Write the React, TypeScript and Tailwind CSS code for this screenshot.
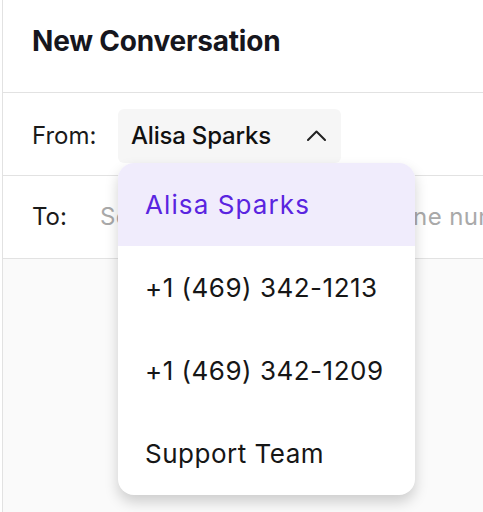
const options = ['Alisa Sparks', '+1 (469) 342-1213', '+1 (469) 342-1209', 'Support Team'];

export default function App() {
  return (
    <div
      className="w-[483px] h-[512px] overflow-hidden bg-white"
      style={{ fontFamily: 'Inter, "Noto Sans", sans-serif' }}
    >
      <div className="h-full ml-[2px] border-l border-[#e2e2e2] flex flex-col">
        <div className="h-[93px] flex items-center pl-[29px] pb-[11px] border-b border-[#e2e2e2]">
          <h1 className="text-[28px] font-bold text-[#16161d] tracking-[-0.2px]">New Conversation</h1>
        </div>

        <div className="h-[83px] flex items-center pl-[29px] pt-[3px] border-b border-[#e2e2e2]">
          <span className="shrink-0 text-[24px] text-[#1a1a1a] w-[86px]">From:</span>
          <div className="relative">
            <button className="flex items-center h-[54px] w-[223px] rounded-[6px] bg-[#f6f6f6] pl-[13px] pr-[15px]">
              <span className="text-[24px] font-medium tracking-[-0.2px] text-[#111]">Alisa Sparks</span>
              <svg className="ml-auto w-[19px] h-[11px]" viewBox="0 0 19 11" fill="none" stroke="#222" strokeWidth={2} strokeLinecap="round" strokeLinejoin="round">
                <path d="M1 10 L9.5 1.5 L18 10" />
              </svg>
            </button>
            <div className="absolute left-0 top-[54px] z-10 w-[297px] rounded-[16px] bg-white overflow-hidden shadow-[0_7px_14px_rgba(0,0,0,0.18)]">
              {options.map((opt, i) => (
                <div
                  key={opt}
                  className={
                    i === 0
                      ? 'h-[83px] flex items-center pl-[27px] text-[26px] tracking-[1.1px] bg-[#f0ecfc] text-[#5a24e0]'
                      : 'h-[83px] flex items-center pl-[27px] text-[26px] tracking-[0.5px] text-[#161616]'
                  }
                >
                  {opt}
                </div>
              ))}
            </div>
          </div>
        </div>

        <div className="h-[83px] flex items-center pl-[29px] border-b border-[#e2e2e2]">
          <span className="shrink-0 text-[24px] text-[#1a1a1a] w-[68px]">To:</span>
          <span className="text-[24px] text-[#a9a9a9] whitespace-nowrap tracking-[0.4px]">Search name, email or phone number</span>
        </div>

        <div className="flex-1 bg-[#fafafa]" />
      </div>
    </div>
  );
}
